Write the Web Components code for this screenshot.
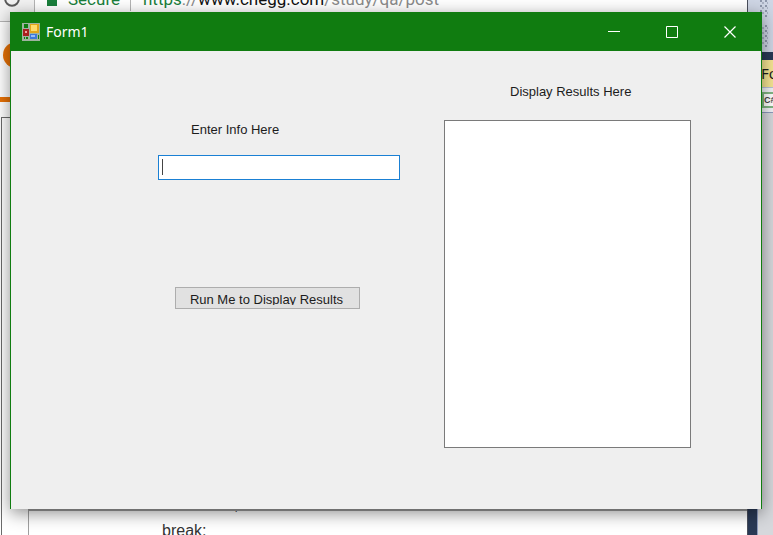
<!DOCTYPE html>
<html lang="en">
<head>
<meta charset="utf-8">
<title>Form1</title>
<style>
  html, body { height: 100%; margin: 0; overflow: hidden; }
  body { font-family: "Liberation Sans", Arial, sans-serif; background: #fff; }
</style>
</head>
<body>
<desk-top>
  <web-browser slot="back">
    <address-bar slot="bar"></address-bar>
    <code-page></code-page>
  </web-browser>
  <ide-edge slot="back"></ide-edge>
  <form-window caption="Form1">
    <text-entry label="Enter Info Here"></text-entry>
    <run-button>Run Me to Display Results</run-button>
    <results-box slot="side" label="Display Results Here"></results-box>
  </form-window>
</desk-top>

<script>
function define(name, html, setup) {
  customElements.define(name, class extends HTMLElement {
    constructor() {
      super();
      const t = document.createElement('template');
      t.innerHTML = html;
      this.attachShadow({ mode: 'open' }).append(t.content.cloneNode(true));
    }
    connectedCallback() { if (setup) setup(this, this.shadowRoot); }
  });
}

define('desk-top', `
<style>
  :host { display: block; position: relative; height: 100vh; overflow: hidden; }
  .back { display: flex; height: 100%; }
  /* the floating window on the desktop */
  .front { position: absolute; inset: 12px 11px 26px 10px; display: flex; }
</style>
<div class="back"><slot name="back"></slot></div>
<div class="front"><slot></slot></div>`);

define('web-browser', `
<style>
  :host { display: flex; flex-direction: column; flex: 1; min-width: 0; background: #fff; overflow: hidden; border-right: 1px solid #4a4f5c; }
</style>
<slot name="bar"></slot><slot></slot>`);

define('address-bar', `
<style>
  :host { display: flex; height: 21px; flex: none; background: #f2f2f2; border-bottom: 1px solid #b4b4b4; overflow: hidden; font: 17px/24px Roboto, "Noto Sans", sans-serif; }
  .reload { width: 34px; flex: none; }
  .reload svg { display: block; }
  .box { flex: 1; display: flex; align-items: flex-end; background: #fff; border-left: 1px solid #b4b4b4; padding: 0 0 10px 12px; white-space: nowrap; }
  .lock { width: 10px; height: 6px; background: #1a7f3c; margin: 0 11px 5px 0; }
  .secure, .scheme { color: #1a7f3c; }
  .rule { width: 1px; height: 24px; background: #b4b4b4; margin: 0 12px 0 10px; }
  .grey { color: #8a8a8a; }
  .host { color: #111; }
</style>
<div class="reload"><svg width="24" height="10" viewBox="0 0 24 10"><circle cx="12" cy="-1" r="6.8" fill="none" stroke="#5a5a5a" stroke-width="2"/></svg></div>
<div class="box"><span class="lock"></span><span class="secure">Secure</span><span class="rule"></span><span><span class="scheme">https</span><span class="grey">://</span><span class="host">www.chegg.com</span><span class="grey">/study/qa/post</span></span></div>`);

define('code-page', `
<style>
  :host { display: flex; flex-direction: column; flex: 1; min-height: 0; }
  .head { height: 75px; flex: none; padding-left: 3px; box-sizing: border-box; padding-top: 20px; }
  .logo { width: 26px; height: 26px; border-radius: 50%; background: #e87206; }
  .band { height: 5px; flex: none; background: #e87206; }
  .frame { flex: 1; min-height: 0; display: flex; align-items: flex-end; margin: 15px 0 0 1px; border: 1px solid #6b6b6b; border-width: 1px 0 0 1px; padding-left: 26px; }
  .code { flex: 1; border: solid #a0a0a0; border-width: 2px 0 0 1px; padding-left: 133px; font: 16px/20px "Liberation Sans", Arial, sans-serif; color: #333; }
  .end { height: 3px; overflow: hidden; display: flex; align-items: flex-end; padding-left: 72px; line-height: 18px; }
  .last { height: 14px; margin-top: 7px; line-height: 20px; }
</style>
<div class="head"><div class="logo"></div></div>
<div class="band"></div>
<div class="frame"><div class="code"><div class="end">;</div><div class="last">break;</div></div></div>`);

define('ide-edge', `
<style>
  :host { display: flex; flex-direction: column; width: 25px; flex: none; background: #293955; overflow: hidden; }
  .tools { height: 52px; flex: none; background: #cfd6e5; display: flex; flex-direction: column; gap: 8px; padding-left: 12px; }
  .grip { height: 17px; width: 8px; background: radial-gradient(circle at 1px 1px, #8e97ab 1px, transparent 1px) 0 0 / 5px 5px, radial-gradient(circle at 1px 1px, #aab2c4 1px, transparent 1px) 2px 2px / 5px 5px; }
  .grip + .grip { height: 22px; }
  .dock { flex: 1; margin: 8px 0 0 9px; display: flex; flex-direction: column; background: #d6d8dc; border-left: 1px solid #8e9bbc; }
  .tab { height: 27px; background: #f6e593; font: 15px/27px "Noto Sans", "Open Sans", sans-serif; color: #1e1e1e; padding-left: 3px; border-bottom: 1px solid #b9c3da; }
  .combo { height: 24px; display: flex; align-items: center; background: #f1f3f7; border-bottom: 1px solid #8e9bbc; padding-left: 4px; }
  .cs { width: 20px; height: 12px; flex: none; border: 2px solid #82b684; background: #fff; font: bold 9px/12px "Liberation Sans", Arial, sans-serif; color: #444; }
</style>
<div class="tools"><div class="grip"></div><div class="grip"></div></div>
<div class="dock"><div class="tab">Fo</div><div class="combo"><div class="cs">C#</div></div></div>`);

define('form-window', `
<style>
  :host { flex: 1; display: flex; flex-direction: column; min-width: 0; box-sizing: border-box; background: #efefef; border: 1px solid #107c10; border-width: 0 1px; box-shadow: 0 4px 16px rgba(0,0,0,.45); }
  header { height: 39px; flex: none; display: flex; align-items: center; background: #107c10; color: #fff; padding: 0 2px 0 11px; font: 14px/20px "Noto Sans", "Open Sans", sans-serif; }
  header svg { display: block; }
  .name { flex: 1; padding-left: 6px; }
  header button { width: 58px; height: 39px; border: 0; padding: 0; background: none; display: grid; place-items: center; }
  main { flex: 1; min-height: 0; display: grid; grid-template-columns: 147fr 242fr 44fr 247fr 70fr; }
  .left { grid-column: 2; padding-top: 68px; }
  .right { grid-column: 4; padding: 30px 0 61px; display: flex; }
</style>
<header>
  <svg width="18" height="18" viewBox="0 0 18 18" aria-hidden="true">
    <rect width="18" height="18" fill="#9fb39f"/>
    <rect x="2" y="1" width="4" height="4" fill="#107c10"/>
    <rect x="1" y="6" width="6" height="7" fill="#a91f1f"/><rect x="3" y="8" width="2" height="2" fill="#f0a0a0"/>
    <rect x="8" y="1" width="9" height="9" fill="#e3a51a"/><rect x="9" y="2" width="6" height="6" fill="#ffdc6b"/>
    <rect x="8" y="11" width="7" height="5" fill="#3f78d8"/><rect x="9" y="12" width="4" height="2" fill="#94bcf8"/>
    <rect x="2" y="14" width="1" height="2" fill="#107c10"/><rect x="4" y="14" width="2" height="2" fill="#107c10"/>
    <rect x="16" y="12" width="1" height="4" fill="#107c10"/>
  </svg>
  <span class="name"></span>
  <button type="button" aria-label="Minimize"><svg width="12" height="12"><path d="M0 5.5h12" stroke="#fff"/></svg></button>
  <button type="button" aria-label="Maximize"><svg width="12" height="12"><path d="M.5.5h11v11H.5z" fill="none" stroke="#fff"/></svg></button>
  <button type="button" aria-label="Close"><svg width="12" height="12"><path d="M.5.5l11 11M11.5.5l-11 11" stroke="#fff" stroke-width="1.2"/></svg></button>
</header>
<main><div class="left"><slot></slot></div><div class="right"><slot name="side"></slot></div></main>`,
(el, root) => { root.querySelector('.name').textContent = el.getAttribute('caption'); });

define('text-entry', `
<style>
  :host { display: block; font-size: 13px; line-height: 22px; color: #1c1c1c; }
  label { display: block; padding-left: 33px; }
  input { display: block; width: 100%; height: 25px; box-sizing: border-box; margin-top: 14px; padding: 0 5px; border: 1px solid #1a80d4; outline: 0; font: inherit; caret-color: transparent;
    background: linear-gradient(#444, #444) 3px 3px / 1px 16px no-repeat #fff; }
</style>
<label for="entry"></label><input id="entry" type="text">`,
(el, root) => { root.querySelector('label').textContent = el.getAttribute('label'); });

define('run-button', `
<style>
  :host { display: block; margin: 107px 40px 0 17px; }
  button { display: block; width: 100%; height: 22px; box-sizing: border-box; border: 1px solid #adadad; background: #e1e1e1; padding: 0 2px 3px 0; color: #1c1c1c; font: 13px/24px "Liberation Sans", Arial, sans-serif; }
  span { display: block; height: 17px; overflow: hidden; white-space: nowrap; }
</style>
<button type="button"><span><slot></slot></span></button>`);

define('results-box', `
<style>
  :host { flex: 1; display: flex; flex-direction: column; font-size: 13px; line-height: 22px; color: #1c1c1c; }
  label { padding-left: 66px; }
  textarea { flex: 1; margin: 17px 0 0; box-sizing: border-box; width: 100%; border: 1px solid #7a7a7a; outline: 0; resize: none; background: #fff; font: inherit; }
</style>
<label for="out"></label><textarea id="out" readonly></textarea>`,
(el, root) => { root.querySelector('label').textContent = el.getAttribute('label'); });
</script>
</body>
</html>
